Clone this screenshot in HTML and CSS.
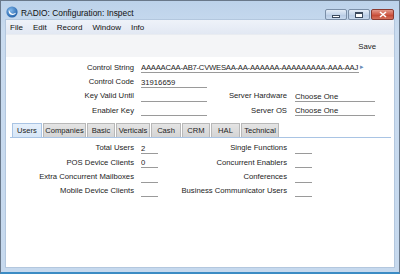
FILE: index.html
```html
<!DOCTYPE html>
<html>
<head>
<meta charset="utf-8">
<link rel="stylesheet" href="styles.css">
</head>
<body>
<div class="window">
  <div class="titlebar">
    <svg class="appicon" width="12" height="12" viewBox="0 0 12 12">
      <defs>
        <radialGradient id="g" cx="0.4" cy="0.35" r="0.7">
          <stop offset="0" stop-color="#7fb6ea"/>
          <stop offset="1" stop-color="#1f5fa8"/>
        </radialGradient>
      </defs>
      <circle cx="6" cy="6" r="5.6" fill="url(#g)"/>
      <path d="M3 3.5 C2 6 3.5 9 6.5 9 C8.5 9 9.8 7.8 10 6.5 C9 7.6 7.2 8 5.8 7.4 C4.2 6.7 3.4 5.2 3 3.5 Z" fill="#fff"/>
    </svg>
    <span class="title">RADIO: Configuration: Inspect</span>
    <div class="caption-btns">
      <span class="cbtn cmin"><span class="glyph-min"></span></span>
      <span class="cbtn cmax"><span class="glyph-max"></span></span>
      <span class="cbtn cclose">
        <svg width="8" height="7" viewBox="0 0 8 7"><path d="M1 1 L7 6 M7 1 L1 6" stroke="#fff" stroke-width="1.6"/></svg>
      </span>
    </div>
  </div>
  <div class="client">
    <div class="menubar">
      <span>File</span><span>Edit</span><span>Record</span><span>Window</span><span>Info</span>
    </div>
    <div class="toolbar"><span class="save">Save</span></div>
    <div class="form">
      <div class="row">
        <span class="label">Control String</span>
        <span class="field f-long">AAAAACAA-AB7-CVWESAA-AA-AAAAAA-AAAAAAAAA-AAA-AAJ</span>
        <span class="more">&#9656;</span>
      </div>
      <div class="row">
        <span class="label">Control Code</span>
        <span class="field f-mid">31916659</span>
      </div>
      <div class="row">
        <span class="label">Key Valid Until</span>
        <span class="field f-mid"></span>
        <span class="label label-r">Server Hardware</span>
        <span class="field f-r">Choose One</span>
      </div>
      <div class="row">
        <span class="label">Enabler Key</span>
        <span class="field f-mid"></span>
        <span class="label label-r">Server OS</span>
        <span class="field f-r">Choose One</span>
      </div>

      <div class="tabs">
        <span class="tab active">Users</span>
        <span class="tab">Companies</span>
        <span class="tab">Basic</span>
        <span class="tab">Verticals</span>
        <span class="tab">Cash</span>
        <span class="tab">CRM</span>
        <span class="tab">HAL</span>
        <span class="tab">Technical</span>
      </div>

      <div class="panel">
        <div class="row">
          <span class="label">Total Users</span>
          <span class="field f-small">2</span>
          <span class="label label-r2">Single Functions</span>
          <span class="field f-small"></span>
        </div>
        <div class="row">
          <span class="label">POS Device Clients</span>
          <span class="field f-small">0</span>
          <span class="label label-r2">Concurrent Enablers</span>
          <span class="field f-small"></span>
        </div>
        <div class="row">
          <span class="label">Extra Concurrent Mailboxes</span>
          <span class="field f-small"></span>
          <span class="label label-r2">Conferences</span>
          <span class="field f-small"></span>
        </div>
        <div class="row">
          <span class="label">Mobile Device Clients</span>
          <span class="field f-small"></span>
          <span class="label label-r2">Business Communicator Users</span>
          <span class="field f-small"></span>
        </div>
      </div>
    </div>
  </div>
</div>
</body>
</html>
```
FILE: styles.css
```css
html, body {
  margin: 0;
  padding: 0;
}
body {
  width: 400px;
  height: 274px;
  overflow: hidden;
  font-family: "Liberation Sans", Arial, sans-serif;
  font-size: 7.7px;
  color: #1c1c1c;
}
.window {
  box-sizing: border-box;
  width: 400px;
  height: 274px;
  background: linear-gradient(#bcd2ea, #c9dbef 30px, #c6d9ee);
  border: 1px solid #69788a;
  border-bottom: 2px solid #3b8cc4;
  padding: 0 5px 5px 5px;
  display: flex;
  flex-direction: column;
}
.titlebar {
  height: 19px;
  display: flex;
  align-items: center;
  position: relative;
}
.appicon {
  margin-left: 0;
  margin-top: 3px;
}
.title {
  margin-left: 3px;
  margin-top: 4px;
  font-size: 8.4px;
  color: #111;
}
.caption-btns {
  margin-left: auto;
  margin-top: 8px;
  display: flex;
  gap: 1px;
  margin-right: 0;
  align-self: flex-start;
}
.cbtn {
  box-sizing: border-box;
  height: 11px;
  display: flex;
  align-items: center;
  justify-content: center;
  border: 1px solid #7b8fa8;
  border-radius: 2px;
}
.cmin, .cmax {
  width: 22px;
  background: linear-gradient(#e3ecf7, #c4d5ea 50%, #b5c9e2 51%, #c8d9ee);
}
.cclose {
  width: 23px;
  border-color: #8c3a30;
  background: linear-gradient(#e49a8c, #cf5b48 50%, #c0432f 51%, #d6715c);
}
.glyph-min {
  width: 8px;
  height: 3px;
  box-sizing: border-box;
  border: 1px solid #3b4a5e;
  background: #fff;
  margin-top: 3px;
}
.glyph-max {
  width: 8px;
  height: 6px;
  box-sizing: border-box;
  border: 1px solid #3b4a5e;
  border-top-width: 2px;
  background: #fff;
}
.client {
  flex: 1;
  background: #fff;
  display: flex;
  flex-direction: column;
  box-shadow: 0 0 0 1px #b3c7de;
}
.menubar {
  height: 14px;
  background: linear-gradient(#eef2f9, #e2e8f3);
  display: flex;
  align-items: center;
  gap: 10px;
  padding-left: 4px;
  font-size: 8px;
  color: #111;
}
.toolbar {
  height: 23px;
  background: #f4f5f7;
  display: flex;
  align-items: center;
  justify-content: flex-end;
  padding-right: 18px;
  border-top: 1px solid #e9ecf1;
  box-sizing: border-box;
}
.save {
  font-size: 7.8px;
}
.form {
  flex: 1;
  padding-top: 3px;
}
.row {
  display: flex;
  align-items: center;
  height: 14.4px;
}
.label {
  width: 128px;
  text-align: right;
  white-space: nowrap;
  flex: none;
}
.field {
  box-sizing: border-box;
  height: 10px;
  line-height: 9px;
  margin-top: 2px;
  border-bottom: 1px solid #9a9a9a;
  white-space: nowrap;
  overflow: hidden;
  flex: none;
  margin-left: 7px;
}
.f-long {
  width: 218px;
  letter-spacing: -0.25px;
}
.f-mid { width: 66px; }
.f-r { width: 80px; margin-left: 8px; }
.f-small { width: 17px; }
.label-r { width: 80px; }
.label-r2 { width: 129px; }
.label-r2 + .field { margin-left: 8px; }
.more {
  color: #6a8db8;
  font-size: 7px;
  margin-left: 1px;
}
.tabs {
  margin: 5px 3px 0 4px;
  padding-left: 2px;
  display: flex;
  border-bottom: 1px solid #a9c4e4;
  height: 14px;
}
.tab {
  box-sizing: border-box;
  height: 14px;
  display: flex;
  align-items: center;
  justify-content: center;
  background: linear-gradient(#e4e4e4, #d4d4d4);
  border: 1px solid #b8b8b8;
  border-bottom: none;
  margin-right: 1px;
  font-size: 7.6px;
  color: #1c1c1c;
}
.tab.active {
  background: linear-gradient(#e6f0fb, #d6e6f7);
  border-color: #a9c4e4;
}
.tab:nth-child(1) { width: 30px; }
.tab:nth-child(2) { width: 43px; }
.tab:nth-child(3) { width: 28px; }
.tab:nth-child(4) { width: 34px; }
.tab:nth-child(5) { width: 30px; }
.tab:nth-child(6) { width: 28px; }
.tab:nth-child(7) { width: 29px; }
.tab:nth-child(8) { width: 38px; }
.panel {
  padding-top: 3px;
}
```
